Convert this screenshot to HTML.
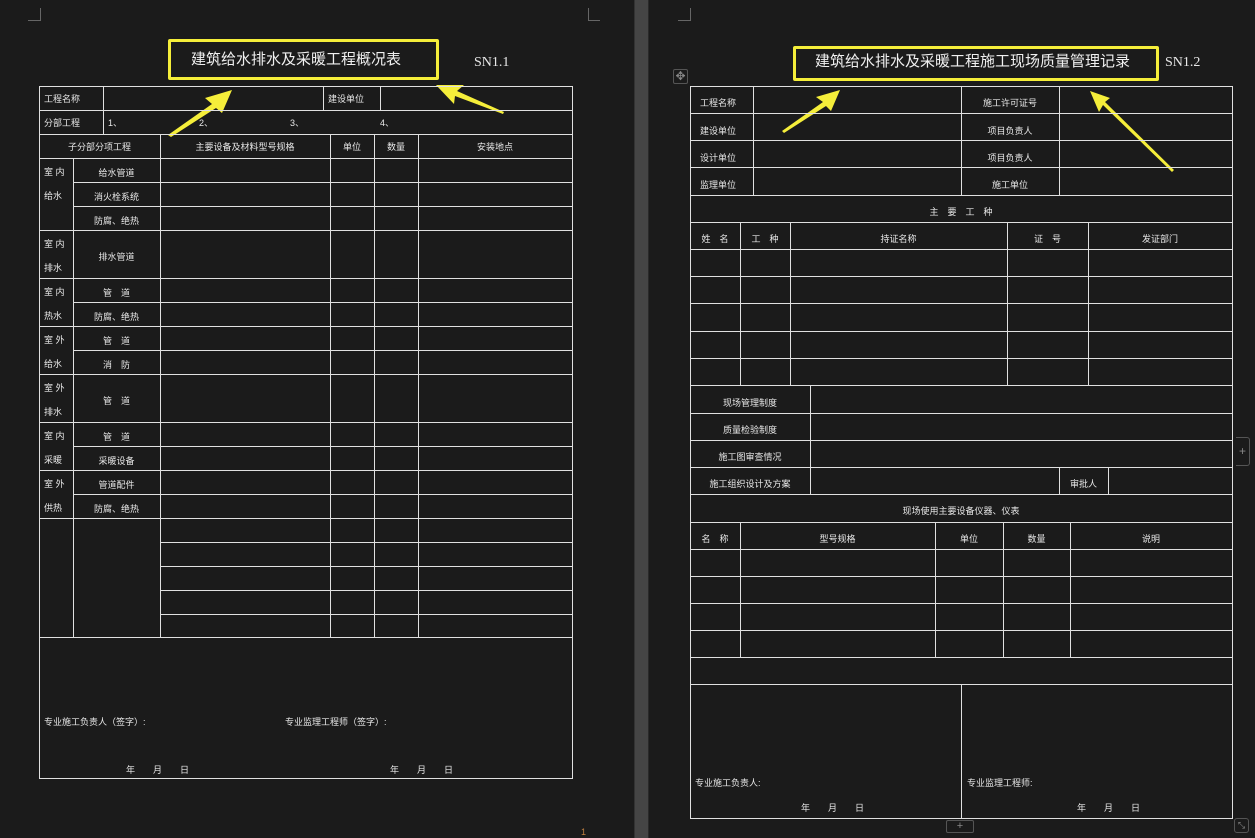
<!DOCTYPE html>
<html><head><meta charset="utf-8"><style>
*{margin:0;padding:0;box-sizing:border-box}
body{width:1255px;height:838px;background:#1b1b1b;position:relative;overflow:hidden;font-family:"Liberation Sans","Noto Sans CJK SC",sans-serif;color:#e8e8e8}
.h{position:absolute;height:1px;background:#e0e0e0}
.v{position:absolute;width:1px;background:#e0e0e0}
.t{position:absolute;font-size:9px;line-height:12px;white-space:nowrap;color:#e8e8e8}
.c{text-align:center}
.m{position:absolute;background:#666}
</style></head><body>
<div style="position:absolute;left:634px;top:0;width:15px;height:838px;background:#454545;border-left:1px solid #333;border-right:1px solid #2a2a2a"></div>
<!-- crop marks -->
<div class="m" style="left:40px;top:8px;width:1px;height:13px"></div><div class="m" style="left:28px;top:20px;width:12px;height:1px"></div>
<div class="m" style="left:588px;top:8px;width:1px;height:13px"></div><div class="m" style="left:588px;top:20px;width:12px;height:1px"></div>
<div class="m" style="left:690px;top:8px;width:1px;height:13px"></div><div class="m" style="left:678px;top:20px;width:12px;height:1px"></div>
<div style="position:absolute;left:673px;top:69px;width:15px;height:15px;border:1px solid #555;border-radius:2px;color:#888;font-size:12px;line-height:13px;text-align:center">✥</div>
<div style="position:absolute;left:1236px;top:437px;width:14px;height:29px;border:1px solid #555;border-left:none;border-radius:0 3px 3px 0;color:#888;font-size:12px;line-height:27px;text-align:center">+</div>
<div style="position:absolute;left:946px;top:820px;width:28px;height:13px;border:1px solid #555;border-radius:2px;color:#888;font-size:11px;line-height:11px;text-align:center">+</div>
<div style="position:absolute;left:1234px;top:818px;width:15px;height:15px;border:1px solid #555;border-radius:3px;color:#888;font-size:9px;line-height:13px;text-align:center">⤡</div>
<div class="t" style="left:581px;top:826px;color:#c08040">1</div>

<!-- titles -->
<div style="position:absolute;left:168px;top:39px;width:271px;height:41px;border:3px solid #f5ee3a;border-radius:2px"></div>
<div class="t" style="left:191px;top:51px;font-size:15px;line-height:18px;color:#f0f0f0">建筑给水排水及采暖工程概况表</div>
<div class="t" style="left:474px;top:55px;font-size:14px;line-height:16px;font-family:'Liberation Serif',serif">SN1.1</div>
<div style="position:absolute;left:793px;top:46px;width:366px;height:35px;border:3px solid #f5ee3a;border-radius:2px"></div>
<div class="t" style="left:815px;top:53px;font-size:15px;line-height:18px;color:#f0f0f0">建筑给水排水及采暖工程施工现场质量管理记录</div>
<div class="t" style="left:1165px;top:55px;font-size:14px;line-height:16px;font-family:'Liberation Serif',serif">SN1.2</div>
<svg style="position:absolute;left:0;top:0" width="1255" height="838">
<g fill="#f5ee3a">
<polygon points="168,135 212,104 205,98 232,90 222,113 216,108 171,137"/>
<polygon points="503,114 455,96 454,104 436,85 464,85 457,91 504,112"/>
<polygon points="782,131 823,102 816,97 840,90 831,111 826,106 784,133"/>
<polygon points="1172,172 1103,105 1099,112 1090,91 1110,98 1105,102 1174,170"/>
</g></svg>

<!-- LEFT TABLE -->
<div class="h" style="left:39px;width:534px;top:86px"></div>
<div class="h" style="left:39px;width:534px;top:110px"></div>
<div class="h" style="left:39px;width:534px;top:134px"></div>
<div class="h" style="left:39px;width:534px;top:158px"></div>
<div class="h" style="left:73px;width:500px;top:182px"></div>
<div class="h" style="left:73px;width:500px;top:206px"></div>
<div class="h" style="left:39px;width:534px;top:230px"></div>
<div class="h" style="left:39px;width:534px;top:278px"></div>
<div class="h" style="left:73px;width:500px;top:302px"></div>
<div class="h" style="left:39px;width:534px;top:326px"></div>
<div class="h" style="left:73px;width:500px;top:350px"></div>
<div class="h" style="left:39px;width:534px;top:374px"></div>
<div class="h" style="left:39px;width:534px;top:422px"></div>
<div class="h" style="left:73px;width:500px;top:446px"></div>
<div class="h" style="left:39px;width:534px;top:470px"></div>
<div class="h" style="left:73px;width:500px;top:494px"></div>
<div class="h" style="left:39px;width:534px;top:518px"></div>
<div class="h" style="left:160px;width:413px;top:542px"></div>
<div class="h" style="left:160px;width:413px;top:566px"></div>
<div class="h" style="left:160px;width:413px;top:590px"></div>
<div class="h" style="left:160px;width:413px;top:614px"></div>
<div class="h" style="left:39px;width:534px;top:637px"></div>
<div class="h" style="left:39px;width:534px;top:778px"></div>
<div class="v" style="left:39px;top:86px;height:693px"></div>
<div class="v" style="left:572px;top:86px;height:693px"></div>
<div class="v" style="left:103px;top:86px;height:48px"></div>
<div class="v" style="left:323px;top:86px;height:24px"></div>
<div class="v" style="left:380px;top:86px;height:24px"></div>
<div class="v" style="left:73px;top:158px;height:479px"></div>
<div class="v" style="left:160px;top:134px;height:503px"></div>
<div class="v" style="left:330px;top:134px;height:503px"></div>
<div class="v" style="left:374px;top:134px;height:503px"></div>
<div class="v" style="left:418px;top:134px;height:503px"></div>

<div class="t" style="left:44px;top:93px">工程名称</div>
<div class="t" style="left:328px;top:93px">建设单位</div>
<div class="t" style="left:44px;top:117px">分部工程</div>
<div class="t" style="left:108px;top:117px">1、</div>
<div class="t" style="left:199px;top:117px">2、</div>
<div class="t" style="left:290px;top:117px">3、</div>
<div class="t" style="left:380px;top:117px">4、</div>
<div class="t c" style="left:39px;width:121px;top:141px">子分部分项工程</div>
<div class="t c" style="left:160px;width:170px;top:141px">主要设备及材料型号规格</div>
<div class="t c" style="left:330px;width:44px;top:141px">单位</div>
<div class="t c" style="left:374px;width:44px;top:141px">数量</div>
<div class="t c" style="left:418px;width:154px;top:141px">安装地点</div>

<div class="t" style="left:44px;top:166px">室 内</div><div class="t" style="left:44px;top:190px">给水</div>
<div class="t" style="left:44px;top:238px">室 内</div><div class="t" style="left:44px;top:262px">排水</div>
<div class="t" style="left:44px;top:286px">室 内</div><div class="t" style="left:44px;top:310px">热水</div>
<div class="t" style="left:44px;top:334px">室 外</div><div class="t" style="left:44px;top:358px">给水</div>
<div class="t" style="left:44px;top:382px">室 外</div><div class="t" style="left:44px;top:406px">排水</div>
<div class="t" style="left:44px;top:430px">室 内</div><div class="t" style="left:44px;top:454px">采暖</div>
<div class="t" style="left:44px;top:478px">室 外</div><div class="t" style="left:44px;top:502px">供热</div>

<div class="t c" style="left:73px;width:87px;top:167px">给水管道</div>
<div class="t c" style="left:73px;width:87px;top:191px">消火栓系统</div>
<div class="t c" style="left:73px;width:87px;top:215px">防腐、绝热</div>
<div class="t c" style="left:73px;width:87px;top:251px">排水管道</div>
<div class="t c" style="left:73px;width:87px;top:287px">管　道</div>
<div class="t c" style="left:73px;width:87px;top:311px">防腐、绝热</div>
<div class="t c" style="left:73px;width:87px;top:335px">管　道</div>
<div class="t c" style="left:73px;width:87px;top:359px">消　防</div>
<div class="t c" style="left:73px;width:87px;top:395px">管　道</div>
<div class="t c" style="left:73px;width:87px;top:431px">管　道</div>
<div class="t c" style="left:73px;width:87px;top:455px">采暖设备</div>
<div class="t c" style="left:73px;width:87px;top:479px">管道配件</div>
<div class="t c" style="left:73px;width:87px;top:503px">防腐、绝热</div>

<div class="t" style="left:44px;top:716px">专业施工负责人（签字）:</div>
<div class="t" style="left:285px;top:716px">专业监理工程师（签字）:</div>
<div class="t" style="left:126px;top:764px">年　　月　　日</div>
<div class="t" style="left:390px;top:764px">年　　月　　日</div>

<!-- RIGHT TABLE -->
<div class="h" style="left:690px;width:543px;top:86px"></div>
<div class="h" style="left:690px;width:543px;top:113px"></div>
<div class="h" style="left:690px;width:543px;top:140px"></div>
<div class="h" style="left:690px;width:543px;top:167px"></div>
<div class="h" style="left:690px;width:543px;top:195px"></div>
<div class="h" style="left:690px;width:543px;top:222px"></div>
<div class="h" style="left:690px;width:543px;top:249px"></div>
<div class="h" style="left:690px;width:543px;top:276px"></div>
<div class="h" style="left:690px;width:543px;top:303px"></div>
<div class="h" style="left:690px;width:543px;top:331px"></div>
<div class="h" style="left:690px;width:543px;top:358px"></div>
<div class="h" style="left:690px;width:543px;top:385px"></div>
<div class="h" style="left:690px;width:543px;top:413px"></div>
<div class="h" style="left:690px;width:543px;top:440px"></div>
<div class="h" style="left:690px;width:543px;top:467px"></div>
<div class="h" style="left:690px;width:543px;top:494px"></div>
<div class="h" style="left:690px;width:543px;top:522px"></div>
<div class="h" style="left:690px;width:543px;top:549px"></div>
<div class="h" style="left:690px;width:543px;top:576px"></div>
<div class="h" style="left:690px;width:543px;top:603px"></div>
<div class="h" style="left:690px;width:543px;top:630px"></div>
<div class="h" style="left:690px;width:543px;top:657px"></div>
<div class="h" style="left:690px;width:543px;top:684px"></div>
<div class="h" style="left:690px;width:543px;top:818px"></div>
<div class="v" style="left:690px;top:86px;height:733px"></div>
<div class="v" style="left:1232px;top:86px;height:733px"></div>
<div class="v" style="left:753px;top:86px;height:109px"></div>
<div class="v" style="left:961px;top:86px;height:109px"></div>
<div class="v" style="left:1059px;top:86px;height:109px"></div>
<div class="v" style="left:740px;top:222px;height:163px"></div>
<div class="v" style="left:790px;top:222px;height:163px"></div>
<div class="v" style="left:1007px;top:222px;height:163px"></div>
<div class="v" style="left:1088px;top:222px;height:163px"></div>
<div class="v" style="left:810px;top:385px;height:109px"></div>
<div class="v" style="left:1059px;top:467px;height:27px"></div>
<div class="v" style="left:1108px;top:467px;height:27px"></div>
<div class="v" style="left:740px;top:522px;height:135px"></div>
<div class="v" style="left:935px;top:522px;height:135px"></div>
<div class="v" style="left:1003px;top:522px;height:135px"></div>
<div class="v" style="left:1070px;top:522px;height:135px"></div>
<div class="v" style="left:961px;top:684px;height:134px"></div>

<div class="t" style="left:700px;top:97px">工程名称</div>
<div class="t" style="left:700px;top:125px">建设单位</div>
<div class="t" style="left:700px;top:152px">设计单位</div>
<div class="t" style="left:700px;top:179px">监理单位</div>
<div class="t c" style="left:961px;width:98px;top:97px">施工许可证号</div>
<div class="t c" style="left:961px;width:98px;top:125px">项目负责人</div>
<div class="t c" style="left:961px;width:98px;top:152px">项目负责人</div>
<div class="t c" style="left:961px;width:98px;top:179px">施工单位</div>
<div class="t c" style="left:690px;width:542px;top:206px">主　要　工　种</div>
<div class="t c" style="left:690px;width:50px;top:233px">姓　名</div>
<div class="t c" style="left:740px;width:50px;top:233px">工　种</div>
<div class="t c" style="left:790px;width:217px;top:233px">持证名称</div>
<div class="t c" style="left:1007px;width:81px;top:233px">证　号</div>
<div class="t c" style="left:1088px;width:144px;top:233px">发证部门</div>
<div class="t c" style="left:690px;width:120px;top:397px">现场管理制度</div>
<div class="t c" style="left:690px;width:120px;top:424px">质量检验制度</div>
<div class="t c" style="left:690px;width:120px;top:451px">施工图审查情况</div>
<div class="t c" style="left:690px;width:120px;top:478px">施工组织设计及方案</div>
<div class="t c" style="left:1059px;width:49px;top:478px">审批人</div>
<div class="t c" style="left:690px;width:542px;top:505px">现场使用主要设备仪器、仪表</div>
<div class="t c" style="left:690px;width:50px;top:533px">名　称</div>
<div class="t c" style="left:740px;width:195px;top:533px">型号规格</div>
<div class="t c" style="left:935px;width:68px;top:533px">单位</div>
<div class="t c" style="left:1003px;width:67px;top:533px">数量</div>
<div class="t c" style="left:1070px;width:162px;top:533px">说明</div>
<div class="t" style="left:695px;top:777px">专业施工负责人:</div>
<div class="t" style="left:967px;top:777px">专业监理工程师:</div>
<div class="t" style="left:801px;top:802px">年　　月　　日</div>
<div class="t" style="left:1077px;top:802px">年　　月　　日</div>
</body></html>
